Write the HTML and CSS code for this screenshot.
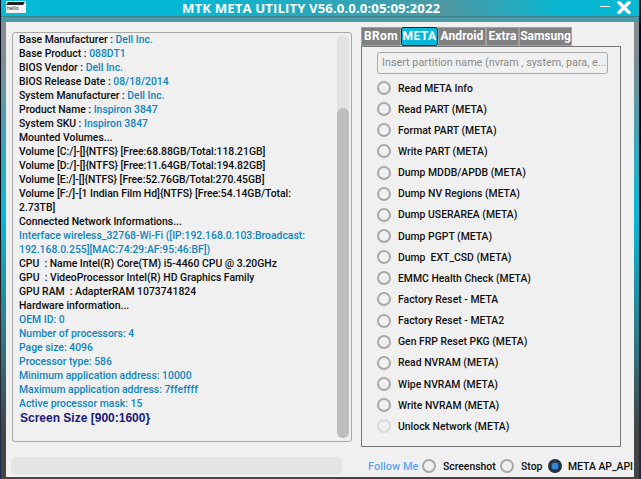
FILE: index.html
```html
<!DOCTYPE html>
<html lang="en">
<head>
<meta charset="utf-8">
<title>MTK META UTILITY</title>
<link rel="stylesheet" href="styles.css">
</head>
<body>
<div class="window">
  <header class="titlebar">
    <div class="logo"><span class="logo-bar"></span><span class="logo-text">hello</span></div>
    <h1 class="title">MTK META UTILITY V56.0.0.0:05:09:2022</h1>
    <div class="controls">
      <span class="min"></span>
      <svg class="close" width="14" height="13" viewBox="0 0 14 13"><path d="M2 1.5 L12 11.5 M12 1.5 L2 11.5" stroke="#fff" stroke-width="3.4" stroke-linecap="round"/></svg>
    </div>
  </header>
  <main class="content">
    <section class="left">
      <div class="info">
        <div class="info-text">
          <p>Base Manufacturer : <b>Dell Inc.</b></p>
          <p>Base Product : <b>088DT1</b></p>
          <p>BIOS Vendor : <b>Dell Inc.</b></p>
          <p>BIOS Release Date : <b>08/18/2014</b></p>
          <p>System Manufacturer : <b>Dell Inc.</b></p>
          <p>Product Name : <b>Inspiron 3847</b></p>
          <p>System SKU : <b>Inspiron 3847</b></p>
          <p>Mounted Volumes...</p>
          <p>Volume [C:/]-[]{NTFS} [Free:68.88GB/Total:118.21GB]</p>
          <p>Volume [D:/]-[]{NTFS} [Free:11.64GB/Total:194.82GB]</p>
          <p>Volume [E:/]-[]{NTFS} [Free:52.76GB/Total:270.45GB]</p>
          <p>Volume [F:/]-[1 Indian Film Hd]{NTFS} [Free:54.14GB/Total:<br>2.73TB]</p>
          <p>Connected Network Informations...</p>
          <p class="blue">Interface wireless_32768-Wi-Fi ([IP:192.168.0.103:Broadcast:<br>192.168.0.255][MAC:74:29:AF:95:46:BF])</p>
          <p>CPU&nbsp; : Name Intel(R) Core(TM) i5-4460 CPU @ 3.20GHz</p>
          <p>GPU&nbsp; : VideoProcessor Intel(R) HD Graphics Family</p>
          <p>GPU RAM&nbsp; : AdapterRAM 1073741824</p>
          <p>Hardware information...</p>
          <p class="blue">OEM ID: 0</p>
          <p class="blue">Number of processors: 4</p>
          <p class="blue">Page size: 4096</p>
          <p class="blue">Processor type: 586</p>
          <p class="blue">Minimum application address: 10000</p>
          <p class="blue">Maximum application address: 7ffeffff</p>
          <p class="blue">Active processor mask: 15</p>
          <p class="screen">Screen Size [900:1600}</p>
        </div>
        <div class="track"><div class="thumb"></div></div>
      </div>
      <div class="progress"></div>
    </section>
    <section class="right">
      <nav class="tabs">
        <span class="tab tab-brom">BRom</span>
        <span class="tab tab-active">META</span>
        <span class="tab tab-android">Android</span>
        <span class="tab tab-extra">Extra</span>
        <span class="tab tab-samsung">Samsung</span>
      </nav>
      <div class="panel">
        <div class="search">Insert partition name (nvram , system, para, e...</div>
        <ul class="options">
          <li><i class="radio"></i>Read META Info</li>
          <li><i class="radio"></i>Read PART (META)</li>
          <li><i class="radio"></i>Format PART (META)</li>
          <li><i class="radio"></i>Write PART (META)</li>
          <li><i class="radio"></i>Dump MDDB/APDB (META)</li>
          <li><i class="radio"></i>Dump NV Regions (META)</li>
          <li><i class="radio"></i>Dump USERAREA (META)</li>
          <li><i class="radio"></i>Dump PGPT (META)</li>
          <li><i class="radio"></i>Dump&nbsp; EXT_CSD (META)</li>
          <li><i class="radio"></i>EMMC Health Check (META)</li>
          <li><i class="radio"></i>Factory Reset - META</li>
          <li><i class="radio"></i>Factory Reset - META2</li>
          <li><i class="radio"></i>Gen FRP Reset PKG (META)</li>
          <li><i class="radio"></i>Read NVRAM (META)</li>
          <li><i class="radio"></i>Wipe NVRAM (META)</li>
          <li><i class="radio"></i>Write NVRAM (META)</li>
          <li><i class="radio radio-off"></i>Unlock Network (META)</li>
        </ul>
      </div>
      <div class="footer">
        <span class="follow">Follow Me</span>
        <i class="radio"></i><span class="foot-a">Screenshot</span>
        <i class="radio"></i><span class="foot-b">Stop</span>
        <i class="radio radio-on"></i><span>META AP_API</span>
      </div>
    </section>
  </main>
</div>
</body>
</html>
```
FILE: styles.css
```css
* { box-sizing: border-box; }
html, body { margin: 0; padding: 0; }
body {
  width: 641px;
  height: 479px;
  overflow: hidden;
  background: linear-gradient(180deg, #0b1020 0%, #05060f 40%, #2a2a2a 65%, #1a2a50 100%);
  font-family: Roboto, "Open Sans", sans-serif;
  font-size: 10.4px;
  font-weight: 500;
  color: #0c0c0c;
}
.window {
  width: 638px;
  height: 479px;
  margin-left: 1px;
  display: flex;
  flex-direction: column;
  background: linear-gradient(180deg, #8a8a8a 0%, #7f8c90 12%, #08b8d8 45%, #2d7f90 68%, #444 90%, #444 100%);
}
.titlebar {
  height: 22px;
  flex: none;
  display: flex;
  align-items: flex-start;
  background: linear-gradient(90deg, #04bad6 0%, #06b8d4 30%, #4d98a3 70%, #06b6d2 88%, #0ab8d2 100%);
  border-bottom: 5px solid #4a9aa6;
  box-shadow: inset 0 -1px 0 #3a7f8a;
}
.logo {
  width: 20px;
  height: 12px;
  margin: 1px 0 0 5px;
  background: #f4f4f4;
  display: flex;
  flex-direction: column;
  padding: 1px 0 0 1px;
}
.logo-bar {
  width: 17px;
  height: 3px;
  background: #222;
  transform: skewX(-30deg);
}
.logo-text {
  font-size: 5.5px;
  line-height: 7px;
  font-weight: 400;
  color: #333;
}
.title {
  margin: 0 0 0 156px;
  width: 262px;
  font-family: "Open Sans", sans-serif;
  font-size: 13.2px;
  line-height: 16px;
  font-weight: 700;
  color: #fff;
  white-space: nowrap;
  letter-spacing: 0.1px;
}
.controls {
  margin-left: auto;
  display: flex;
  align-items: flex-start;
  padding: 1px 8px 0 0;
  gap: 7px;
}
.min {
  width: 10px;
  height: 1px;
  background: #fff;
  margin-top: 5px;
}
.content {
  flex: none;
  width: 628px;
  height: 455px;
  margin-left: 5px;
  background: #f0f0f0;
  display: flex;
  border-bottom: 0;
}
.left {
  width: 355px;
  flex: none;
  padding: 10px 0 0 6px;
  display: flex;
  flex-direction: column;
}
.info {
  width: 340px;
  height: 410px;
  border: 1px solid #a8a8a8;
  border-radius: 3px;
  display: flex;
  justify-content: space-between;
  padding: 0 2px 3px 6px;
}
.info-text p {
  margin: 0;
  line-height: 14px;
  white-space: nowrap;
}
.info-text b { font-weight: 500; color: #0f86bd; }
.info-text .blue { color: #0f86bd; }
.info-text .screen {
  font-family: "Liberation Sans", Arial, sans-serif;
  font-size: 12px;
  font-weight: 700;
  color: #1b1b78;
  padding-left: 1px;
}
.track {
  width: 12px;
  margin-top: 2px;
  background: #e3e3e3;
  border-radius: 6px;
  padding-top: 73px;
  display: flex;
}
.thumb {
  flex: 1;
  background: #bdbdbd;
  border-radius: 6px;
}
.progress {
  width: 331px;
  height: 18px;
  margin: 15px 0 0 -1px;
  background: #e4e4e4;
  border-radius: 5px;
}
.right {
  width: 273px;
  flex: none;
  display: flex;
  flex-direction: column;
  padding: 5px 0 0 0;
}
.tabs { display: flex; height: 19px; }
.tab {
  background: #808080;
  color: #fff;
  font-weight: 700;
  font-size: 12px;
  letter-spacing: 0.4px;
  line-height: 17px;
  text-align: center;
  border: 1px solid #a0a0a0;
  white-space: nowrap;
  overflow: hidden;
}
.tab-brom { width: 40px; }
.tab-active {
  width: 37px;
  background: #06b8d8;
  border: 1px solid #1a2a30;
  border-radius: 2px;
}
.tab-android { width: 48px; letter-spacing: 0.1px; }
.tab-extra { width: 33px; letter-spacing: 0.1px; }
.tab-samsung { width: 53px; letter-spacing: 0; }
.panel {
  width: 260px;
  height: 401px;
  border: 1px solid #777;
  padding: 5px 0 0 15px;
}
.search {
  width: 231px;
  height: 22px;
  border: 1px solid #aaa;
  border-radius: 3px;
  padding-left: 4px;
  color: #8a8a8a;
  font-size: 10.8px;
  font-weight: 400;
  line-height: 20px;
  white-space: nowrap;
}
.options {
  list-style: none;
  margin: 3.5px 0 0;
  padding: 0;
  display: flex;
  flex-direction: column;
}
.options li {
  height: 21.15px;
  display: flex;
  align-items: center;
  gap: 7px;
  white-space: nowrap;
  color: #101010;
}
.radio {
  width: 14px;
  height: 14px;
  flex: none;
  border: 2px solid #a9a9a9;
  border-radius: 50%;
  background: #f0f0f0;
}
.radio-off { border-color: #dcdcdc; }
.radio-on {
  border: 3px solid #2b2f3a;
  background: #2e88d8;
  box-shadow: inset 0 0 0 0.5px #1b2a40;
}
.footer {
  display: flex;
  align-items: center;
  height: 20px;
  margin-top: 9px;
  padding-left: 7px;
  white-space: nowrap;
}
.follow {
  color: #5aa8f0;
  font-size: 11px;
  width: 54px;
  flex: none;
}
.foot-a { margin: 0 0 0 7px; width: 57px; flex: none; }
.foot-b { margin: 0 0 0 7px; width: 27px; flex: none; }
.footer > span:last-child { margin-left: 6px; }
```
